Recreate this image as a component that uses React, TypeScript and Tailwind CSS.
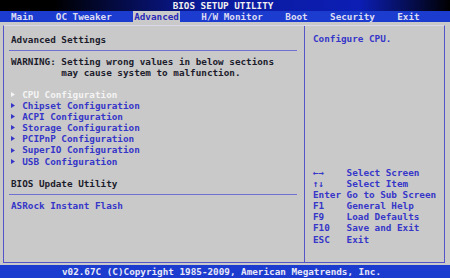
const font = "font-['DejaVu_Sans_Mono','Liberation_Mono',monospace]";

const tabs = ["Main", "OC Tweaker", "Advanced", "H/W Monitor", "Boot", "Security", "Exit"];

const items = [
  "CPU Configuration",
  "Chipset Configuration",
  "ACPI Configuration",
  "Storage Configuration",
  "PCIPnP Configuration",
  "SuperIO Configuration",
  "USB Configuration",
];

const keys = [
  ["←→", "Select Screen"],
  ["↑↓", "Select Item"],
  ["Enter", "Go to Sub Screen"],
  ["F1", "General Help"],
  ["F9", "Load Defaults"],
  ["F10", "Save and Exit"],
  ["ESC", "Exit"],
];

function Arrow({ color }: { color: string }) {
  return (
    <span className="w-[11.2px] shrink-0 flex items-center">
      <svg width="4" height="5" viewBox="0 0 4 5">
        <polygon points="0,0 4,2.5 0,5" fill={color} />
      </svg>
    </span>
  );
}

export default function App() {
  return (
    <div
      className={`w-[450px] h-[278px] flex flex-col bg-[#c9c9c9] text-[9.3px] font-bold overflow-hidden ${font}`}
    >
      {/* title */}
      <div className="h-[11px] flex items-center justify-center bg-[linear-gradient(90deg,#000000_12%,#0a1a9c_45%,#0c1eb4_80%,#000000_100%)] text-[#f0f0f0] leading-[11px] pr-[4px]">
        BIOS SETUP UTILITY
      </div>
      {/* menu */}
      <div className="h-[11px] flex items-center gap-[22.4px] pl-[11px] bg-[#1c3ccf] text-[#dcdcf4] leading-[11px]">
        {tabs.map((t) =>
          t === "Advanced" ? (
            <span key={t} className="bg-[#cacaca] text-[#2a2ab8] -mx-[1px] px-[1px]">
              {t}
            </span>
          ) : (
            <span key={t}>{t}</span>
          )
        )}
      </div>

      {/* body */}
      <div className="flex-1 pt-[3px] pb-[2px] pl-[3px] pr-[5px]">
        <div className="h-full flex border border-[#5454c8] border-t-[#d8d8e8]">
          {/* left */}
          <div className="w-[301px] border-r border-[#5454c8] pt-[8px] flex flex-col leading-[11px]">
            <div className="pl-[7px] text-[#1c1c2c] h-[11px]">Advanced Settings</div>
            <div className="h-px bg-[#7070d0] mt-[5px] ml-[5px] mr-[7px]" />
            <div className="pl-[7px] mt-[5px] text-[#1c1c2c] whitespace-pre">
              <div className="h-[11px]">WARNING: Setting wrong values in below sections</div>
              <div className="h-[11px]">{"         may cause system to malfunction."}</div>
            </div>
            <div className="pl-[7px] mt-[11px] flex flex-col">
              {items.map((it, i) => (
                <div
                  key={it}
                  className={`h-[11.1px] leading-[11.1px] flex ${i === 0 ? "text-[#f4f4f4]" : "text-[#3636c8]"}`}
                >
                  <Arrow color={i === 0 ? "#f4f4f4" : "#3636c8"} />
                  <span>{it}</span>
                </div>
              ))}
            </div>
            <div className="pl-[7px] mt-[11px] h-[11px] text-[#1c1c2c]">BIOS Update Utility</div>
            <div className="h-px bg-[#7070d0] mt-[5px] ml-[5px] mr-[7px]" />
            <div className="pl-[7px] mt-[5px] h-[11px] text-[#3636c8]">ASRock Instant Flash</div>
          </div>

          {/* right */}
          <div className="flex-1 pt-[7px] pl-[8px] flex flex-col leading-[11px] text-[#3636c8]">
            <div className="h-[11px]">Configure CPU.</div>
            <div className="mt-[123px] flex flex-col">
              {keys.map(([k, d]) => (
                <div key={k} className="h-[11.1px] leading-[11.1px] flex">
                  <span className="w-[33.6px] shrink-0">{k}</span>
                  <span>{d}</span>
                </div>
              ))}
            </div>
          </div>
        </div>
      </div>

      {/* footer */}
      <div className="h-[13px] flex items-center justify-center bg-[#1c3ccf] text-[#e8e8f8] leading-[13px] pr-[7px]">
        v02.67C (C)Copyright 1985-2009, American Megatrends, Inc.
      </div>
    </div>
  );
}
